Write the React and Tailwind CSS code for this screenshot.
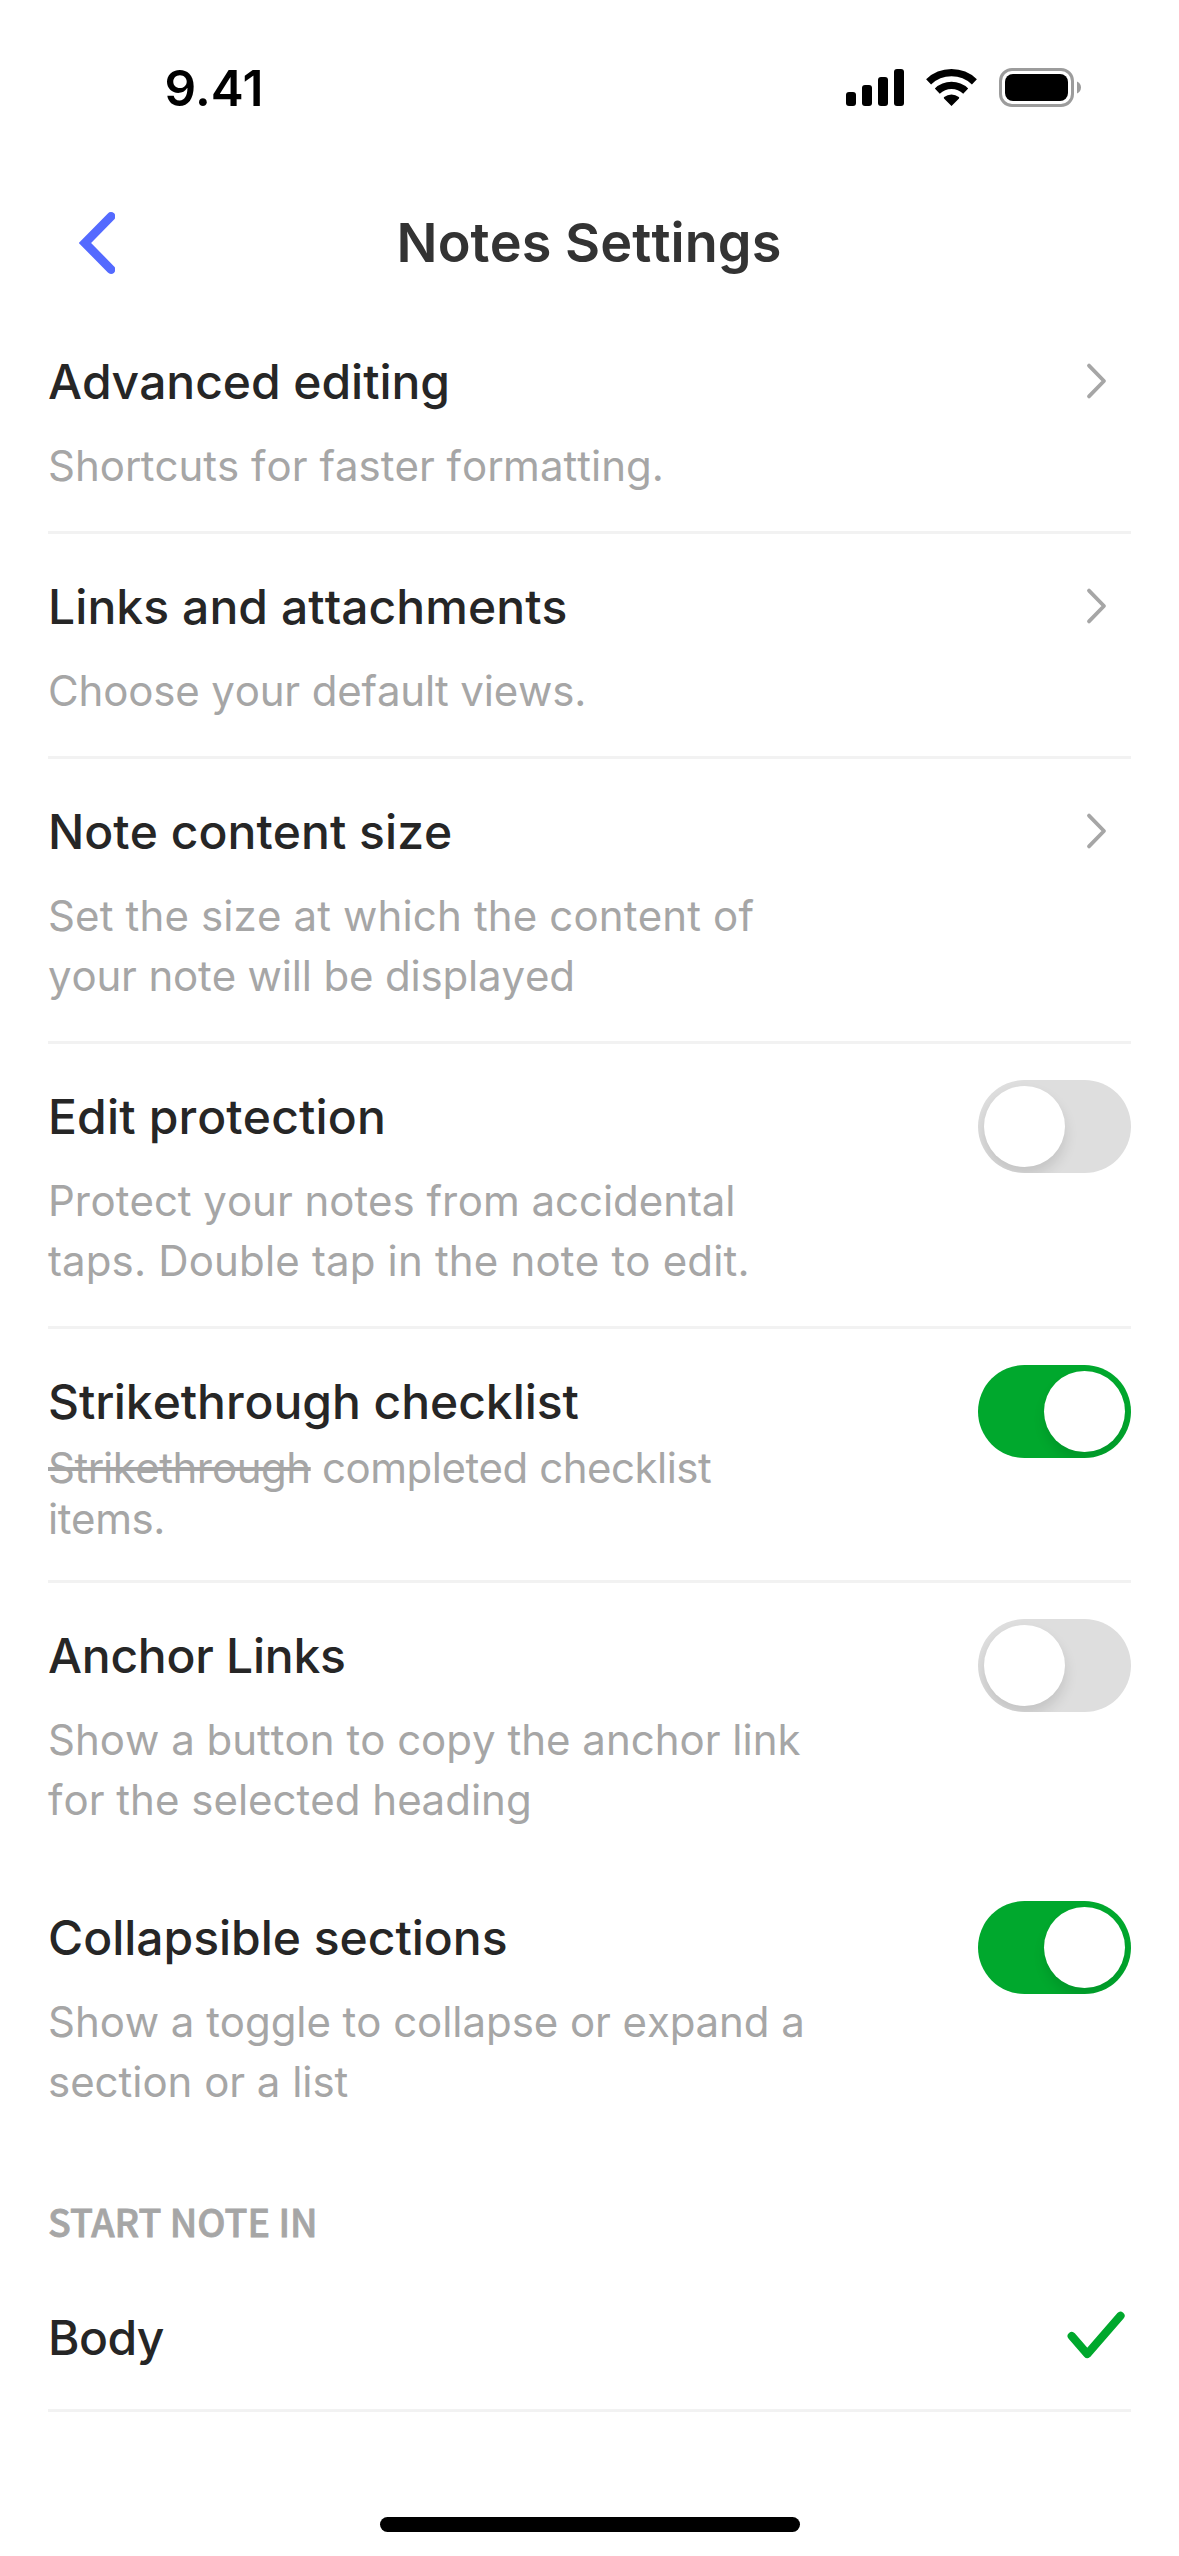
function StatusBar() {
  return (
    <div className="flex h-[176px] items-start justify-between pt-[58px] pr-[97px] pl-[164.5px]">
      <span className="text-[49.5px] leading-[60px] font-semibold tracking-[0.15px] text-black [font-kerning:normal]">
        9.41
      </span>
      <svg className="mt-[8px] h-[44px] w-[237px]" viewBox="845 66 237 44" fill="none">
        <rect x="846" y="92" width="10" height="14" rx="3" fill="#000" />
        <rect x="862" y="85" width="10" height="21" rx="3" fill="#000" />
        <rect x="878" y="77" width="10" height="29" rx="3" fill="#000" />
        <rect x="894" y="69" width="10" height="37" rx="3" fill="#000" />
        <path d="M928.6 81.8A33.3 33.3 0 0 1 974.4 81.8" stroke="#000" strokeWidth="7.2" />
        <path d="M937.3 91.1A20.6 20.6 0 0 1 965.7 91.1" stroke="#000" strokeWidth="7.2" />
        <path d="M951.5 106L944 98.4Q943.4 97.7 944.2 97.1A11.9 11.9 0 0 1 958.8 97.1Q959.6 97.7 959 98.4Z" fill="#000" />
        <rect x="1000.5" y="69.5" width="72" height="36" rx="11.5" stroke="#9c9c9c" strokeWidth="3" />
        <rect x="1005" y="74" width="63" height="27" rx="8" fill="#000" />
        <path d="M1077 81.5C1079.4 82.5 1081 84.8 1081 87.5C1081 90.2 1079.4 92.5 1077 93.5Z" fill="#9c9c9c" />
      </svg>
    </div>
  );
}

function Header() {
  return (
    <header className="grid h-[133px] grid-cols-[1fr_auto_1fr] items-center pr-[80px] pl-[79px]">
      <svg className="h-[64px] w-[36px]" viewBox="0 0 36 64" fill="none">
        <path d="M32 5.5L6 32L32 58.5" stroke="#546aff" strokeWidth="8.8" strokeLinecap="round" />
      </svg>
      <h1 className="text-[54px] leading-[66px] font-semibold tracking-[0.06px] text-[#333333]">
        Notes Settings
      </h1>
    </header>
  );
}

function Chevron() {
  return (
    <svg className="mt-[51px] mr-[23px] h-[42px] w-[24px]" viewBox="0 0 24 42" fill="none">
      <path
        d="M5 5.6L20 21L5 36.4"
        stroke="#a6a6a6"
        strokeWidth="3.8"
        strokeLinecap="round"
        strokeLinejoin="round"
      />
    </svg>
  );
}

function Toggle({ on }) {
  return (
    <div
      role="switch"
      aria-checked={on}
      className={
        on
          ? "mt-[36px] flex h-[93px] w-[153px] justify-end overflow-hidden rounded-full bg-[#00a82d] p-[6px]"
          : "mt-[36px] flex h-[93px] w-[153px] justify-start overflow-hidden rounded-full bg-[#dedede] p-[6px]"
      }
    >
      <div
        className={
          on
            ? "size-[81px] rounded-full bg-white shadow-[0_8px_12px_rgba(0,0,0,0.10)]"
            : "size-[81px] rounded-full bg-white shadow-[0_8px_14px_rgba(0,0,0,0.12)]"
        }
      />
    </div>
  );
}

function Row({ title, titleClass = "", lines, control, divider = true, compact = false }) {
  return (
    <section
      className={
        divider
          ? "flex items-start justify-between border-b-[3px] border-[#f2f2f2]"
          : "flex items-start justify-between"
      }
    >
      <div className={compact ? "pt-[43px] pb-[36px]" : "pt-[43px] pb-[35px]"}>
        <h2 className={`text-[48px] leading-[60px] font-medium text-[#262626] ${titleClass}`}>{title}</h2>
        <p
          className={
            compact
              ? "mt-[10px] text-[42px] leading-[51px] text-[#a6a6a6]"
              : "mt-[24px] text-[42px] leading-[60px] text-[#a6a6a6]"
          }
        >
          {lines.map(([text, tracking], i) => (
            <span key={i} className={`block whitespace-nowrap ${tracking}`}>
              {text}
            </span>
          ))}
        </p>
      </div>
      {control}
    </section>
  );
}

export default function App() {
  return (
    <div className="flex h-[2556px] w-[1179px] flex-col overflow-hidden bg-white font-['Inter',sans-serif] [font-kerning:none]">
      <StatusBar />
      <Header />
      <main className="px-[48px]">
        <Row
          title="Advanced editing"
          titleClass="tracking-[-0.05px]"
          lines={[["Shortcuts for faster formatting.", "tracking-[0px]"]]}
          control={<Chevron />}
        />
        <Row
          title="Links and attachments"
          titleClass="tracking-[0.08px]"
          lines={[["Choose your default views.", "tracking-[-0.16px]"]]}
          control={<Chevron />}
        />
        <Row
          title="Note content size"
          titleClass="tracking-[0.03px]"
          lines={[
            ["Set the size at which the content of", "tracking-[0.14px]"],
            ["your note will be displayed", "tracking-[-0.17px]"],
          ]}
          control={<Chevron />}
        />
        <Row
          title="Edit protection"
          titleClass="tracking-[0.16px]"
          lines={[
            ["Protect your notes from accidental", "tracking-[-0.03px]"],
            ["taps. Double tap in the note to edit.", "tracking-[0.18px]"],
          ]}
          control={<Toggle on={false} />}
        />
        <Row
          title="Strikethrough checklist"
          titleClass="tracking-[-0.04px]"
          compact
          lines={[
            [
              <>
                <s>Strikethrough</s> completed checklist
              </>,
              "tracking-[-0.5px]",
            ],
            ["items.", "tracking-[-0.4px]"],
          ]}
          control={<Toggle on />}
        />
        <Row
          title="Anchor Links"
          titleClass="tracking-[-0.25px]"
          divider={false}
          lines={[
            ["Show a button to copy the anchor link", "tracking-[0px]"],
            ["for the selected heading", "tracking-[0px]"],
          ]}
          control={<Toggle on={false} />}
        />
        <Row
          title="Collapsible sections"
          titleClass="tracking-[-0.02px]"
          divider={false}
          lines={[
            ["Show a toggle to collapse or expand a", "tracking-[-0.06px]"],
            ["section or a list", "tracking-[-0.03px]"],
          ]}
          control={<Toggle on />}
        />
        <h3 className="mt-[44px] h-[63px] font-['Noto_Sans_CJK_SC',sans-serif] text-[37.5px] leading-[60px] font-medium text-[#a6a6a6] [-webkit-text-stroke:0.8px_#a6a6a6] [font-kerning:normal]">
          START NOTE IN
        </h3>
        <div className="flex items-center justify-between border-b-[3px] border-[#f2f2f2] pt-[54px] pb-[41px]">
          <span className="text-[48px] leading-[60px] font-medium tracking-[-0.5px] text-[#262626]">Body</span>
          <svg className="mr-[6px] h-[60px] w-[58px]" viewBox="1067 2308 58 60" fill="none">
            <path
              d="M1071.7 2336L1087.3 2354L1120.5 2315.8"
              stroke="#00a82d"
              strokeWidth="8.2"
              strokeLinecap="round"
              strokeLinejoin="round"
            />
          </svg>
        </div>
      </main>
      <div className="mt-auto mb-[24px] ml-[380px] h-[15px] w-[420px] rounded-full bg-black" />
    </div>
  );
}
